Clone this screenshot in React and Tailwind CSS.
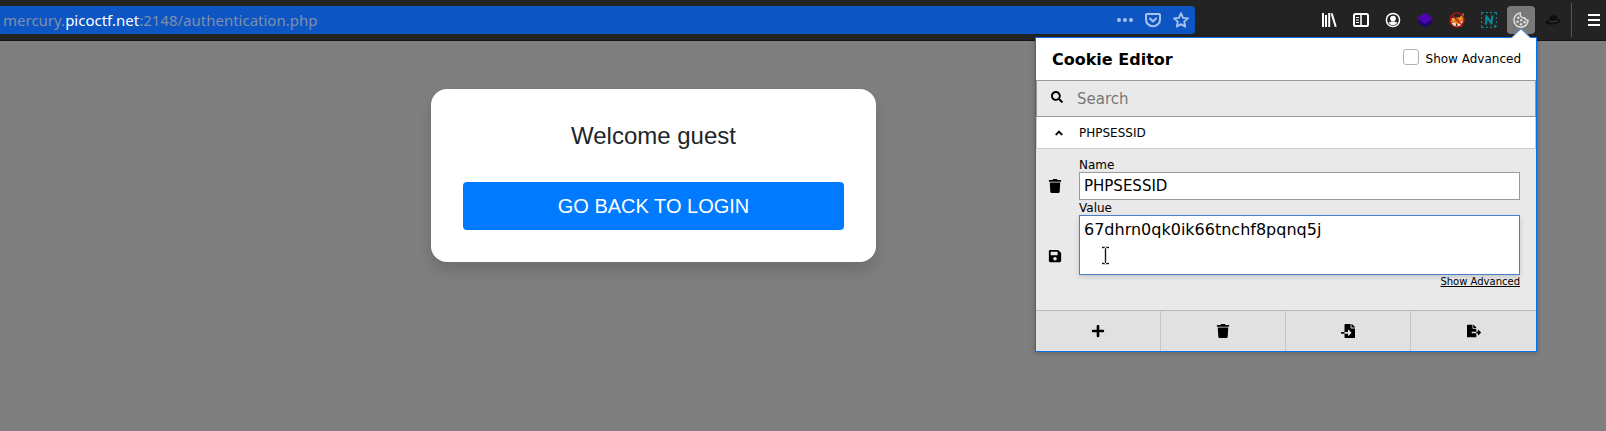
import { FaAngleUp, FaFileExport, FaFileImport, FaPlus, FaSave, FaSearch, FaTrash } from "react-icons/fa";

const TOOL = "flex size-7 shrink-0 items-center justify-center rounded";

function AddressBar() {
  return (
    <div className="flex h-7 w-[1195px] min-w-0 shrink items-center rounded-r bg-[#0d55c3] pl-[3px]">
      <div className="min-w-0 flex-1 truncate font-['Noto_Sans',sans-serif] text-[15px] leading-7 text-[#7f8fa8]">
        mercury.<span className="text-white">picoctf.net</span>:2148/authentication.php
      </div>
      <div className="flex items-center text-[#a9c3ec]">
        <button type="button" aria-label="Page actions" className="flex size-7 items-center justify-center">
          <svg viewBox="0 0 16 16" className="size-4" fill="currentColor">
            <circle cx="2" cy="8" r="2" />
            <circle cx="8" cy="8" r="2" />
            <circle cx="14" cy="8" r="2" />
          </svg>
        </button>
        <button type="button" aria-label="Save to Pocket" className="flex size-7 items-center justify-center">
          <svg viewBox="0 0 16 16" className="size-4" fill="none" stroke="currentColor" strokeWidth="2" strokeLinecap="round" strokeLinejoin="round">
            <path d="M2 2h12a1 1 0 0 1 1 1v4.5a7 6.8 0 0 1-14 0V3a1 1 0 0 1 1-1z" />
            <path d="M5 6.5l3 3 3-3" />
          </svg>
        </button>
        <button type="button" aria-label="Bookmark" className="flex size-7 items-center justify-center">
          <svg viewBox="0 0 16 16" className="size-4" fill="none" stroke="currentColor" strokeWidth="1.8" strokeLinejoin="round">
            <path d="M8 1.2l2 4.6 5 .5-3.8 3.4 1.1 4.9L8 12.1l-4.3 2.5 1.1-4.9L1 6.3l5-.5z" />
          </svg>
        </button>
      </div>
    </div>
  );
}

function ToolbarButtons() {
  return (
    <div className="flex h-7 shrink-0 items-center gap-1 text-white">
      <button type="button" aria-label="Library" className={TOOL}>
        <svg viewBox="0 0 16 16" className="size-4" fill="none" stroke="currentColor" strokeWidth="2">
          <path d="M2 1v14M5 3v12M8.2 1v14" />
          <path d="M10.6 1.4l4.2 13.3" />
        </svg>
      </button>
      <button type="button" aria-label="Sidebars" className={TOOL}>
        <svg viewBox="0 0 16 16" className="size-4" fill="none" stroke="currentColor">
          <rect x="1" y="2" width="14" height="12" rx="1.6" strokeWidth="2" />
          <path d="M8 2.5v11" strokeWidth="1.6" />
          <path d="M3 5.5h3M3 8h3M3 10.5h3" strokeWidth="1.1" />
        </svg>
      </button>
      <button type="button" aria-label="Account" className={TOOL}>
        <svg viewBox="0 0 16 16" className="size-4" fill="none" stroke="currentColor">
          <circle cx="8" cy="8" r="6.6" strokeWidth="1.5" />
          <circle cx="8" cy="6.6" r="2.9" fill="currentColor" stroke="none" />
          <path d="M3.6 10.4c1.2 0 2-.2 2.6-.8h3.6c.6.6 1.4.8 2.6.8-.8 1.7-2.4 2.6-4.4 2.6s-3.6-.9-4.4-2.6z" fill="currentColor" stroke="none" />
        </svg>
      </button>
      <button type="button" aria-label="Layers" className={TOOL}>
        <svg viewBox="0 0 16 16" className="size-4">
          <path d="M0 10l8-4.5 8 4.5-8 5.5z" fill="#24007a" />
          <path d="M0 6.2L8 .5l8 5.7L8 12z" fill="#4d05b0" />
        </svg>
      </button>
      <button type="button" aria-label="Proxy disabled" className={TOOL}>
        <svg viewBox="0 0 16 16" className="size-4">
          <path d="M.6 9.5L5 5.6l5.6-.3L14.6.8l.6 7.4-2.4 6.2-5.2.8-5-1.6z" fill="#e07818" />
          <path d="M3 11l3.2-.6 1.5 3 3.6-3.6 2.4-.6-1.6 4.3-4.6 1.5-3.5-1z" fill="#f0e9df" />
          <path d="M2 6.5l3-1 1.4 2.3-2.2 1.4zM9.4 7l2.8-2.6.6 3z" fill="#f5a348" />
          <circle cx="7.6" cy="13" r="1" fill="#43302a" />
          <circle cx="8" cy="8" r="7" fill="none" stroke="#b01212" strokeWidth="1.3" />
          <path d="M3 3l10 10" stroke="#b01212" strokeWidth="1.4" />
        </svg>
      </button>
      <button type="button" aria-label="Nimbus capture" className={TOOL}>
        <svg viewBox="0 0 16 16" className="size-4" fill="none" stroke="#0b8791">
          <path d="M.6 3V.6H3M5 .6h2M9 .6h2M13 .6h2.4V3M15.4 5v2M15.4 9v2M.6 5v2M.6 9v2M.6 13v2.4H3M5 15.4h2M9 15.4h2" strokeWidth="1.1" />
          <path d="M12.6 14.4h3.2M14.2 12.8V16" strokeWidth="1.1" />
          <path d="M4.600 12.600c1-2.600.7-5.600.8-8.400 2 1.800 3.200 5 5 7.400.6-2.300.2-5.600 1-8" strokeWidth="2.200" strokeLinejoin="round" />
        </svg>
      </button>
      <button type="button" aria-label="Cookie Editor" className={`${TOOL} bg-[#787878]`}>
        <svg viewBox="0 0 16 16" className="size-4" fill="none" stroke="#dedede">
          <path d="M7.600 1a7.100 7.100 0 1 0 7.500 7.200 3.200 3.200 0 0 1-3.400-2.400A3.400 3.400 0 0 1 8 4.600 3.400 3.400 0 0 1 7.600 1z" strokeWidth="1.500" strokeLinejoin="round" />
          <g fill="#dedede" stroke="none">
            <circle cx="5.300" cy="5.800" r="1.300" />
            <circle cx="4.600" cy="9.800" r="1.300" />
            <circle cx="8.200" cy="8.300" r="1.200" />
            <circle cx="8" cy="12.200" r="1.300" />
            <circle cx="11.600" cy="10.200" r="1.300" />
          </g>
        </svg>
      </button>
      <button type="button" aria-label="Hat" className={TOOL}>
        <svg viewBox="0 0 16 16" className="size-4">
          <path d="M.2 10c1-1.200 2.300-1.600 3.800-1.800L4.800 4.400c2.200-1.200 5-1.400 7-.6l.8 3.600c1.500-.2 3-.2 3.200.8C15.200 10.400 11 12.400 7.500 12.600 4 12.700.7 12 .2 10z" fill="#0e0e0e" />
          <path d="M4 9.200c2.600 1 6.200.6 8.800-.8" fill="none" stroke="#414141" strokeWidth="1" />
        </svg>
      </button>
      <div className="h-[34px] w-px shrink-0 bg-[#555]" />
      <button type="button" aria-label="Menu" className="ml-1.5 flex h-7 w-6 shrink-0 items-center justify-center">
        <svg viewBox="0 0 16 16" className="size-4" fill="none" stroke="currentColor" strokeWidth="2">
          <path d="M2 3h12M2 8h12M2 13h12" />
        </svg>
      </button>
    </div>
  );
}

function CookieEditor() {
  const actions = [
    ["Add", FaPlus],
    ["Delete all", FaTrash],
    ["Import", FaFileImport],
    ["Export", FaFileExport],
  ];
  return (
    <section className="absolute top-[37px] right-[69px] w-[502px] border border-[#0a6fe8] bg-white font-['DejaVu_Sans',sans-serif] text-xs leading-4 text-black shadow-[0_1px_5px_rgba(0,0,0,0.25)]">
      <svg viewBox="0 0 20 10" className="absolute -top-[10px] right-[5px] h-[10px] w-5">
        <path d="M0 10L10 .8 20 10z" fill="#fff" />
        <path d="M0 9.500h1L10 .8l9 8.700h1" fill="none" stroke="#3b8cf0" strokeWidth="1" />
      </svg>
      <header className="flex h-[42px] items-center justify-between pr-[15px] pl-4">
        <h1 className="pt-0.5 text-base leading-6 font-bold">Cookie Editor</h1>
        <label className="flex items-center gap-[7px]">
          <input type="checkbox" className="mb-1 size-4 appearance-none rounded-[3px] border border-[#b8b0a8] bg-white" />
          Show Advanced
        </label>
      </header>
      <label className="flex h-[37px] items-center border border-[#999] bg-[#e9e9e9] pl-3.5">
        <FaSearch className="mb-1 size-3 shrink-0" />
        <input
          type="text"
          aria-label="Search"
          placeholder="Search"
          className="ml-3.5 min-w-0 flex-1 bg-transparent text-[15px] outline-none placeholder:text-[#777]"
        />
      </label>
      <button type="button" aria-expanded="true" className="flex h-8 w-full items-center border border-t-0 border-[#ccc] bg-white text-left">
        <span className="flex w-[42px] justify-center pl-0.5">
          <FaAngleUp className="size-3" />
        </span>
        PHPSESSID
      </button>
      <div className="flex h-[161px] bg-[#e9e9e9] pr-4">
        <div className="flex w-[37px] flex-col items-center pt-0.5">
          <button type="button" aria-label="Delete" className="flex h-[70px] items-center">
            <FaTrash className="size-3.5" />
          </button>
          <button type="button" aria-label="Save" className="flex h-[70px] items-center">
            <FaSave className="size-3.5" />
          </button>
        </div>
        <form className="ml-1.5 flex min-w-0 flex-1 flex-col pt-2">
          <label htmlFor="cookie-name" className="h-[15px] leading-4">Name</label>
          <input
            id="cookie-name"
            type="text"
            defaultValue="PHPSESSID"
            className="h-7 border border-[#999] bg-white px-1 text-[15px] outline-none"
          />
          <label htmlFor="cookie-value" className="h-[15px] leading-4">Value</label>
          <div className="relative h-[60px]">
            <textarea
              id="cookie-value"
              defaultValue="67dhrn0qk0ik66tnchf8pqnq5j"
              className="block h-full w-full resize-none border border-[#4b7fc4] bg-white px-1 py-1 text-base leading-5 shadow-[0_2px_5px_rgba(0,0,0,0.15)] outline-none"
            />
            <svg viewBox="0 0 9 19" className="absolute top-[31px] left-[22px] h-[19px] w-[9px]" fill="none">
              <path d="M1 1.500h2.500l1 1 1-1H8M4.500 2v15M1 17.500h2.500l1-1 1 1H8" stroke="#aaa" strokeWidth="3" />
              <path d="M1 1.500h2.500l1 1 1-1H8M4.500 2v15M1 17.500h2.500l1-1 1 1H8" stroke="#fff" strokeWidth="2" />
              <path d="M1 1.500h2.500l1 1 1-1H8M4.500 2v15M1 17.500h2.500l1-1 1 1H8" stroke="#111" strokeWidth="1" />
            </svg>
          </div>
          <a href="#advanced" className="self-end text-[10px] leading-[14px] underline">Show Advanced</a>
        </form>
      </div>
      <footer className="grid h-[41px] grid-cols-4 divide-x divide-[#c6c6c6] border-t border-[#b9b9b9] bg-[#e1e1e1]">
        {actions.map(([label, Icon]) => (
          <button key={label} type="button" aria-label={label} className="flex items-center justify-center">
            <Icon className="size-3.5" />
          </button>
        ))}
      </footer>
    </section>
  );
}

export default function App() {
  return (
    <div className="relative flex min-h-screen flex-col bg-[#7f7f7f]">
      <nav className="flex h-[41px] items-start justify-between border-b border-[#141414] bg-[#232323] pt-1.5">
        <AddressBar />
        <ToolbarButtons />
      </nav>
      <main className="flex flex-1 justify-center pt-12 pr-[299px] font-['Liberation_Sans',sans-serif]">
        <div className="w-full max-w-[445px] self-start rounded-2xl bg-white p-8 text-center shadow-[0_8px_16px_rgba(0,0,0,0.15)]">
          <h2 className="text-2xl leading-[29px] text-[#212529]">Welcome guest</h2>
          <a href="#login" className="mt-8 block rounded bg-[#007bff] text-xl leading-[48px] text-white">GO BACK TO LOGIN</a>
        </div>
      </main>
      <CookieEditor />
    </div>
  );
}
